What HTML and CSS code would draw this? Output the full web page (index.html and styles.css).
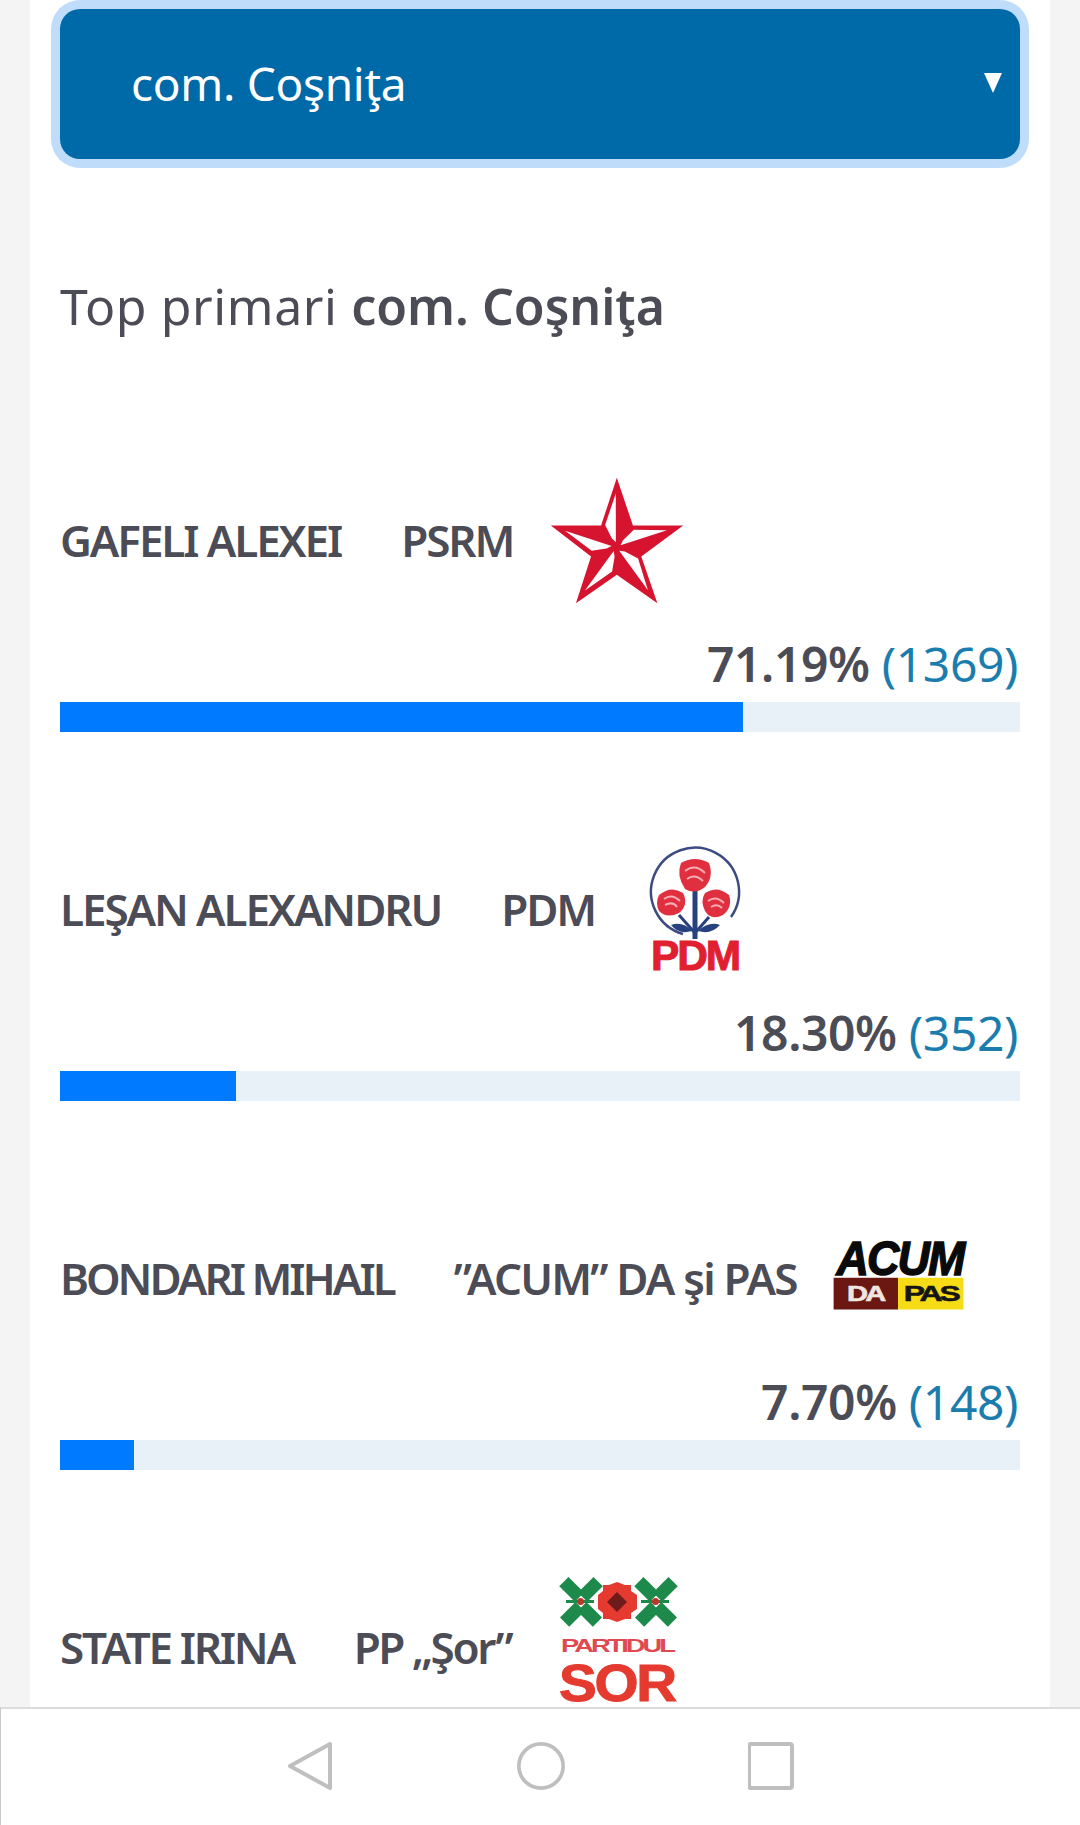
FILE: index.html
```html
<!DOCTYPE html>
<html lang="ro">
<head>
<meta charset="utf-8">
<title>Top primari com. Coşniţa</title>
<link rel="stylesheet" href="styles.css">
</head>
<body>
<main class="viewport">
  <div class="card">
    <div class="select"><span>com. Coşniţa</span></div>
    <h2 class="title">Top primari <b>com. Coşniţa</b></h2>

    <section class="cand">
      <div class="who">
        <span class="name">GAFELI ALEXEI</span><span class="party">PSRM</span>
        <svg class="logo logo-star" viewBox="88 50 399 385">
          <polygon fill="#d6142f" points="287,55 335,198 485,198 360,290 408,430 287,345 165,430 210,290 90,198 240,198"/>
          <g fill="#fff">
            <polygon points="284,102 252,196 272,236 284,248"/>
            <polygon transform="rotate(72 285 262)" points="284,102 252,196 272,236 284,248"/>
            <polygon transform="rotate(144 285 262)" points="284,102 252,196 272,236 284,248"/>
            <polygon transform="rotate(216 285 262)" points="284,102 252,196 272,236 284,248"/>
            <polygon transform="rotate(288 285 262)" points="284,102 252,196 272,236 284,248"/>
          </g>
        </svg>
      </div>
      <div class="result"><b>71.19%</b> <span>(1369)</span></div>
      <div class="track"><div class="fill" style="width:71.19%"></div></div>
    </section>

    <section class="cand">
      <div class="who">
        <span class="name">LEŞAN ALEXANDRU</span><span class="party">PDM</span>
        <svg class="logo logo-pdm" viewBox="20 8 116 144">
          <path d="M114 84A44 44 0 1 0 66 101" fill="none" stroke="#3c4c82" stroke-width="2.500"/>
          <path d="M78 55V106" stroke="#27407f" stroke-width="5" fill="none"/>
          <path d="M78 100L62 82M78 100L92 84" stroke="#27407f" stroke-width="3" fill="none"/>
          <path d="M54 92Q66 88 75 98Q62 102 54 92ZM103 92Q92 88 81 98Q94 102 103 92Z" fill="#27407f"/>
          <path d="M64 30Q78 22 92 30Q97 44 88 54Q78 62 68 56Q59 42 64 30Z" fill="#e0303f"/>
          <path d="M42 62Q54 52 66 60Q72 72 62 80Q50 86 42 78Q38 70 42 62Z" fill="#e0303f"/>
          <path d="M88 60Q100 52 112 62Q116 74 106 82Q94 88 88 78Q83 68 88 60Z" fill="#e0303f"/>
          <path d="M68 38Q78 30 88 40M70 46Q78 40 86 48M47 66Q55 60 63 68M48 72Q56 68 60 74M91 68Q99 62 107 70M94 74Q100 70 105 75" fill="none" stroke="#f7aeb4" stroke-width="2"/>
          <text class="logo-pdm-text" x="78" y="137" text-anchor="middle" textLength="88" lengthAdjust="spacingAndGlyphs">PDM</text>
        </svg>
      </div>
      <div class="result"><b>18.30%</b> <span>(352)</span></div>
      <div class="track"><div class="fill" style="width:18.3%"></div></div>
    </section>

    <section class="cand">
      <div class="who">
        <span class="name name-tight">BONDARI MIHAIL</span><span class="party party-loose">”ACUM” DA şi PAS</span>
        <svg class="logo logo-acum" viewBox="2 4 156 106">
          <text class="acum-text" x="15" y="60" textLength="132" lengthAdjust="spacingAndGlyphs">ACUM</text>
          <rect x="12" y="63" width="67" height="33" fill="#6b1712"/>
          <rect x="79" y="63" width="68" height="33" fill="#f6dc16"/>
          <text class="acum-sub acum-da" x="45" y="87" text-anchor="middle" textLength="38" lengthAdjust="spacingAndGlyphs">DA</text>
          <text class="acum-sub" x="113" y="87" text-anchor="middle" textLength="56" lengthAdjust="spacingAndGlyphs">PAS</text>
        </svg>
      </div>
      <div class="result"><b>7.70%</b> <span>(148)</span></div>
      <div class="track"><div class="fill" style="width:7.7%"></div></div>
    </section>

    <section class="cand">
      <div class="who">
        <span class="name name-state">STATE IRINA</span><span class="party party-sor">PP „Şor”</span>
        <svg class="logo logo-sor" viewBox="12 12 134 150">
          <g fill="#1d8a4b">
            <rect x="22" y="26" width="22" height="13" transform="rotate(45 33 32)"/>
            <rect x="40" y="26" width="22" height="13" transform="rotate(-45 51 32)"/>
            <rect x="22" y="51" width="22" height="13" transform="rotate(-45 33 57)"/>
            <rect x="40" y="51" width="22" height="13" transform="rotate(45 51 57)"/>
            <rect x="27" y="43" width="28" height="3"/>
            <rect x="97" y="26" width="22" height="13" transform="rotate(45 108 32)"/>
            <rect x="115" y="26" width="22" height="13" transform="rotate(-45 126 32)"/>
            <rect x="97" y="51" width="22" height="13" transform="rotate(-45 108 57)"/>
            <rect x="115" y="51" width="22" height="13" transform="rotate(45 126 57)"/>
            <rect x="102" y="43" width="28" height="3"/>
          </g>
          <circle cx="41.500" cy="44.500" r="3.500" fill="#b8392c"/>
          <circle cx="116.500" cy="44.500" r="3.500" fill="#b8392c"/>
          <path d="M78 25L86 28L92 28L92 34L98 38V52L92 56L92 62L86 62L78 65L70 62L64 62L64 56L59 52V38L64 34L64 28L70 28Z" fill="#e53a2f"/>
          <path d="M78 35L88 45L78 55L68 45Z" fill="#6f1b1c"/>
          <text class="sor-small" x="78" y="95" text-anchor="middle" textLength="112" lengthAdjust="spacingAndGlyphs">PARTIDUL</text>
          <text class="sor-big" x="78" y="144" text-anchor="middle" textLength="116" lengthAdjust="spacingAndGlyphs">SOR</text>
        </svg>
      </div>
    </section>
  </div>
</main>
<nav class="navbar">
  <svg class="nav-icon" viewBox="0 0 48 50"><path d="M44 3L4 25L44 47Z"/></svg>
  <svg class="nav-icon" viewBox="0 0 52 52"><circle cx="26" cy="26" r="24"/></svg>
  <svg class="nav-icon" viewBox="0 0 48 50"><rect x="1" y="3" width="43" height="44" rx="2"/></svg>
</nav>
</body>
</html>
```
FILE: styles.css
```css
* { box-sizing: border-box; }
html, body { margin: 0; height: 100%; }
body {
  width: 1080px;
  height: 1825px;
  display: flex;
  flex-direction: column;
  overflow: hidden;
  background: #fff;
  font-family: "Noto Sans", "Open Sans", sans-serif;
  font-feature-settings: "locl" 0;
  color: #4c4c56;
}
.viewport {
  flex: 0 0 1707px;
  background: #f4f4f4;
  padding: 0 30px;
  overflow: hidden;
}
.card {
  background: #fff;
  height: 100%;
  padding: 9px 30px 0;
}
.select {
  position: relative;
  height: 150px;
  display: flex;
  align-items: center;
  padding-left: 71px;
  padding-bottom: 2px;
  background: #0069a8;
  border-radius: 20px;
  box-shadow: 0 0 0 9px #bfdcfb;
  color: #fff;
  font-size: 46px;
  letter-spacing: -0.3px;
}
.select::after {
  content: "";
  position: absolute;
  right: 18px;
  top: 64px;
  border-left: 9px solid transparent;
  border-right: 9px solid transparent;
  border-top: 20px solid #fff;
}
.title {
  margin: 109px 0 0;
  font-size: 50px;
  line-height: 76px;
  font-weight: 400;
  letter-spacing: 0.6px;
}
.title b { font-weight: 600; letter-spacing: 0; }
.cand { margin-bottom: 102px; }
.cand:first-of-type { margin-top: 121px; }
.who {
  display: flex;
  align-items: center;
  height: 150px;
  margin-bottom: 23px;
  font-size: 44px;
  font-weight: 600;
  letter-spacing: -2.1px;
}
.name { margin-right: 60px; }
.name-tight { letter-spacing: -3px; }
.name-state { letter-spacing: -2.3px; }
.party-loose { letter-spacing: -1.8px; }
.party-sor { letter-spacing: -2.4px; }
.logo { display: block; flex: none; }
.logo-star { width: 134px; height: 129px; margin-left: 37px; }
.logo-pdm { width: 116px; height: 144px; margin-left: 42px; margin-top: 8px; }
.logo-acum { width: 150px; height: 102px; margin-left: 27px; margin-bottom: 12px; }
.logo-sor { width: 134px; height: 150px; margin-left: 40px; margin-bottom: 6px; }
.logo-pdm-text { font: 700 42px "Liberation Sans", sans-serif; fill: #e01f30; stroke: #e01f30; stroke-width: 1px; }
.acum-text { font: italic 700 50px "Liberation Sans", sans-serif; fill: #0a0a0a; stroke: #0a0a0a; stroke-width: 1.5px; }
.acum-sub { font: 700 22px "Liberation Sans", sans-serif; fill: #151515; stroke: #151515; stroke-width: 0.6px; }
.acum-da { fill: #f0e6e0; stroke: #f0e6e0; }
.sor-small { font: 700 19px "Liberation Sans", sans-serif; fill: #df4a50; }
.sor-big { font: 700 52px "Liberation Sans", sans-serif; fill: #e53a2f; stroke: #e53a2f; stroke-width: 1px; }
.result {
  height: 52px;
  line-height: 52px;
  margin-bottom: 12px;
  padding-right: 2px;
  text-align: right;
  font-size: 48px;
  letter-spacing: -0.4px;
}
.result b { font-weight: 600; }
.result span { color: #1a7dae; }
.track { height: 30px; background: #e9f1f8; }
.fill { height: 100%; background: #007bff; }
.navbar {
  flex: 1;
  display: flex;
  justify-content: center;
  align-items: flex-start;
  gap: 183px;
  padding-top: 32px;
  background: #fff;
  border-top: 2px solid #dcdcdc;
  border-left: 1px solid #c8c8c8;
}
.nav-icon { width: 48px; height: 50px; fill: none; stroke: #bfbfbf; stroke-width: 4; stroke-linejoin: round; }
```
